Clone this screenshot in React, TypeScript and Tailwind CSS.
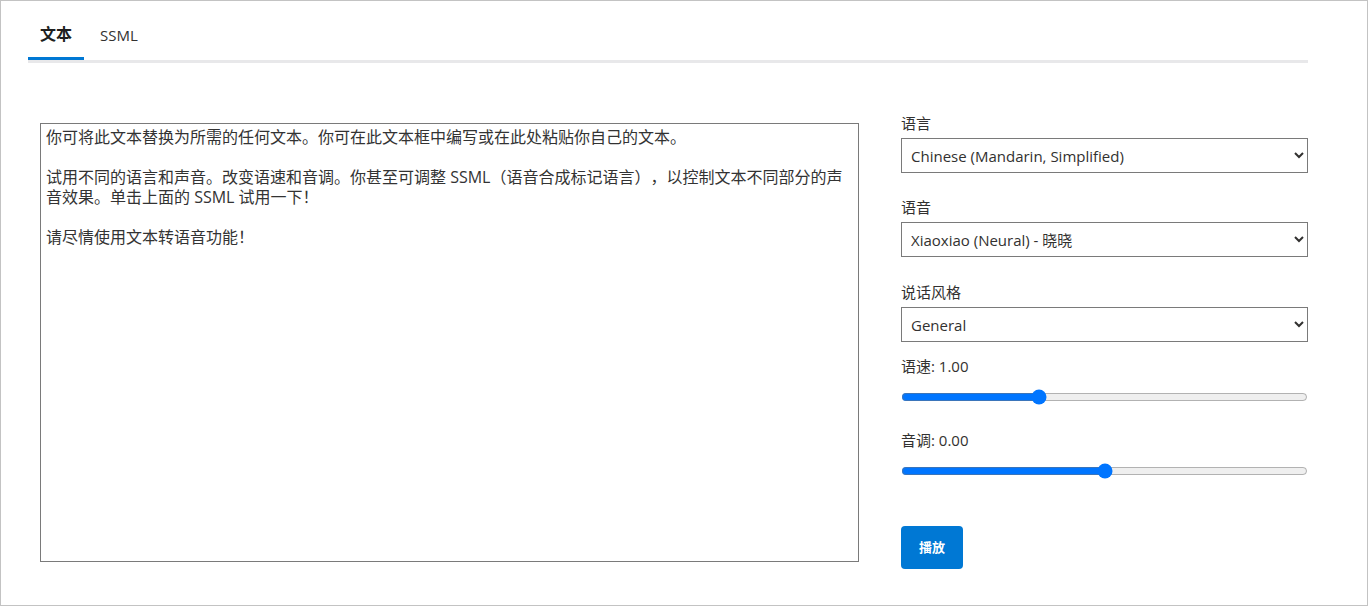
import React from "react";

const text = `你可将此文本替换为所需的任何文本。你可在此文本框中编写或在此处粘贴你自己的文本。

试用不同的语言和声音。改变语速和音调。你甚至可调整 SSML（语音合成标记语言），以控制文本不同部分的声音效果。单击上面的 SSML 试用一下！

请尽情使用文本转语音功能！`;

export default function App() {
  const font = { fontFamily: '"Open Sans", "Noto Sans CJK SC", sans-serif' };
  return (
    <div
      className="w-[1368px] h-[606px] border border-[#c3c3c3] bg-white text-[#323130] overflow-hidden"
      style={font}
    >
      <div className="ml-[27px] w-[1280px]">
        <div className="flex pt-[9px] border-b-[3px] border-[#e8e8ea]">
          <div className="px-3 h-[50px] flex items-center text-[16px] font-bold text-[#201f1e] border-b-[3px] border-[#0078d4] -mb-[3px]">
            文本
          </div>
          <div className="px-4 h-[50px] flex items-center text-[15px] text-[#323130]">SSML</div>
        </div>
        <div className="flex pl-[12px] pt-[60px]">
          <textarea
            defaultValue={text}
            className="w-[819px] h-[439px] border border-[#7a7a7a] px-[5px] py-[3px] text-[16px] leading-[20px] text-[#333] resize-none outline-none [text-spacing-trim:space-all]"
            style={font}
          />
          <div className="ml-[42px] w-[407px] flex flex-col text-[15px]">
            <label className="-mt-[10px] leading-[20px] h-[20px]">语言</label>
            <select className="mt-[5px] h-[35px] border border-[#7a7a7a] pl-[5px] pr-[4px] text-[15px] text-[#323130]" style={font}>
              <option>Chinese (Mandarin, Simplified)</option>
            </select>
            <label className="mt-[24px] leading-[20px] h-[20px]">语音</label>
            <select className="mt-[5px] h-[35px] border border-[#7a7a7a] pl-[5px] pr-[4px] text-[15px] text-[#323130]" style={font}>
              <option>Xiaoxiao (Neural) - 晓晓</option>
            </select>
            <label className="mt-[25px] leading-[20px] h-[20px]">说话风格</label>
            <select className="mt-[5px] h-[35px] border border-[#7a7a7a] pl-[5px] pr-[4px] text-[15px] text-[#323130]" style={font}>
              <option>General</option>
            </select>
            <label className="mt-[14px] leading-[20px] h-[20px]">语速: 1.00</label>
            <input type="range" min={0} max={3} step={0.01} defaultValue={1} className="mt-[13px] w-[407px] h-[16px] m-0" />
            <label className="mt-[25px] leading-[20px] h-[20px]">音调: 0.00</label>
            <input type="range" min={-1} max={1} step={0.01} defaultValue={0} className="mt-[13px] w-[407px] h-[16px] m-0" />
            <div className="mt-[47px]">
              <button className="w-[62px] h-[43px] rounded-[4px] bg-[#0078d4] text-white text-[13px] font-bold">
                播放
              </button>
            </div>
          </div>
        </div>
      </div>
    </div>
  );
}
